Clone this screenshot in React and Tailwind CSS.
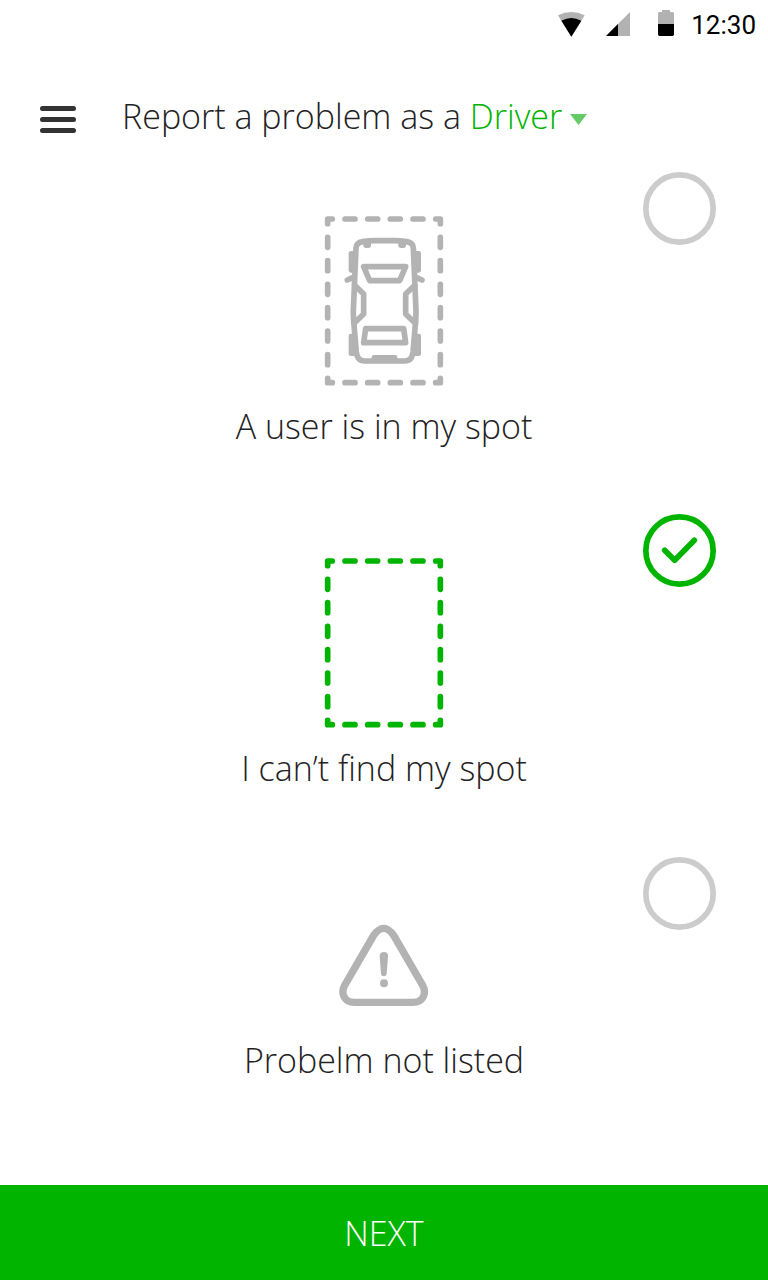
import { useState } from "react";

function StatusBar() {
  return (
    <div className="flex h-[50px] items-center justify-end pr-3">
      <svg className="mr-[21px] mb-[2px] h-[25px] w-[27px]" viewBox="54 36 81 75" aria-hidden="true">
        <path d="M54 46Q94 26 134 46L94 110Z" fill="#b2b2b2" />
        <path d="M64 62Q94 46 124 62L94 110Z" fill="#000" />
      </svg>
      <svg className="mr-7 mb-[2px] size-6" viewBox="0 0 72 72" aria-hidden="true">
        <path d="M0 72L72 0V72Z" fill="#b2b2b2" />
        <path d="M0 72L36 36V72Z" fill="#000" />
      </svg>
      <svg className="mr-[17px] mb-1 h-[26px] w-4" viewBox="0 0 48 78" aria-hidden="true">
        <path d="M12 0H36V6H44Q48 6 48 11V42H0V11Q0 6 4 6H12Z" fill="#b2b2b2" />
        <path d="M0 42H48V73Q48 78 43 78H5Q0 78 0 73Z" fill="#000" />
      </svg>
      <span className="font-['Roboto',sans-serif] text-[26px] font-normal leading-8 text-black">12:30</span>
    </div>
  );
}

function SpotIcon({ car }) {
  const columns = [93, 161, 229, 297];
  const rows = [94, 164, 235, 305, 375, 446];
  return (
    <svg
      className="h-[170px] w-[120px]"
      viewBox="30 30 360 510"
      fill="none"
      stroke="currentColor"
      strokeWidth="17"
      strokeLinecap="round"
      strokeLinejoin="round"
      aria-hidden="true"
    >
      <path d="M41 53V39H55M365 39H379V53M379 517V530H365M55 530H41V517" />
      {columns.map((x) => (
        <path key={x} d={`M${x} 39h30M${x} 530h30`} />
      ))}
      {rows.map((y) => (
        <path key={y} d={`M41 ${y}v30M379 ${y}v30`} />
      ))}
      {car && (
        <g>
          <path d="M126 126Q127 110 146 107Q164 104 184 104H240Q260 104 278 107Q297 110 298 126L306 315Q306 330 305 345L297 438Q294 465 272 465H152Q130 465 127 438L119 345Q118 330 118 315Z" />
          <path d="M149 182H275L257 224H167ZM155 368H269L275 410H149Z" />
          <path d="M122 238L149 264V324L120 352M302 238L275 264V324L304 352" />
          <path d="M100 222L116 215M324 222L308 215" />
          <g fill="currentColor" stroke="none">
            <rect x="104" y="135" width="20" height="65" rx="7" />
            <rect x="300" y="135" width="21" height="65" rx="7" />
            <rect x="104" y="383" width="22" height="67" rx="7" />
            <rect x="298" y="383" width="23" height="67" rx="7" />
            <rect x="148" y="104" width="23" height="22" rx="8" />
            <rect x="253" y="104" width="23" height="22" rx="8" />
            <rect x="173" y="447" width="77" height="18" rx="7" />
          </g>
        </g>
      )}
    </svg>
  );
}

function WarningIcon() {
  return (
    <svg className="h-[82px] w-[91px]" viewBox="45 42 273 246" fill="none" aria-hidden="true">
      <path
        d="M152 76Q182 34 212 76L299 226C312 250 300 277 270 277H94C64 277 52 250 65 226Z"
        stroke="currentColor"
        strokeWidth="22"
      />
      <path d="M170 138Q170 126 183 126Q195 126 195 138L191 192Q190 199 183 199Q175 199 174 192Z" fill="currentColor" />
      <circle cx="183" cy="220" r="12" fill="currentColor" />
    </svg>
  );
}

function Option({ value, label, checked, onSelect, icon, className }) {
  return (
    <label className={`grid cursor-pointer grid-cols-[1fr_auto_1fr] px-[52px] ${className}`}>
      <span className="col-start-2 flex flex-col items-center">
        <span className={checked ? "text-[#00b400]" : "text-[#b3b3b3]"}>{icon}</span>
        <span className="text-[#222]">{label}</span>
      </span>
      <span className={`col-start-3 row-start-1 grid size-[73px] justify-self-end ${checked ? "text-[#00b400]" : "text-[#ccc]"}`}>
        <input
          type="radio"
          name="problem"
          value={value}
          checked={checked}
          onChange={() => onSelect(value)}
          className="col-start-1 row-start-1 size-full cursor-pointer appearance-none rounded-full"
        />
        <svg
          className="pointer-events-none col-start-1 row-start-1 size-full"
          viewBox="39 42 219 219"
          fill="none"
          stroke="currentColor"
          strokeWidth="17"
          strokeLinecap="round"
          strokeLinejoin="round"
          aria-hidden="true"
        >
          <circle cx="148.500" cy="151.500" r="101" />
          {checked && <path d="M104 151L134 181L193 121" />}
        </svg>
      </span>
    </label>
  );
}

export default function App() {
  const [problem, setProblem] = useState("missing");
  return (
    <div className="flex min-h-screen flex-col bg-white font-['Open_Sans','Noto_Sans',sans-serif] text-[34px] font-light leading-10 text-[#222]">
      <StatusBar />
      <header className="flex items-center px-10 pt-[46px]">
        <button type="button" aria-label="Menu" className="mt-[6px] mr-[46px] flex w-9 flex-col gap-[6px]">
          <span className="h-[5px] rounded-full bg-[#333]" />
          <span className="h-[5px] rounded-full bg-[#333]" />
          <span className="h-[5px] rounded-full bg-[#333]" />
        </button>
        <label htmlFor="role" className="whitespace-pre">Report a problem as a </label>
        <span className="flex items-center text-[#00b400]">
          <select id="role" className="field-sizing-content appearance-none bg-transparent">
            <option>Driver</option>
          </select>
          <svg className="mt-[6px] ml-2 h-[11px] w-[17px]" viewBox="0 0 17 11" aria-hidden="true">
            <path d="M0 0H17L8.500 11Z" fill="#66cb66" />
          </svg>
        </span>
      </header>
      <main className="flex flex-1 flex-col pt-9">
        <Option
          value="occupied"
          label="A user is in my spot"
          checked={problem === "occupied"}
          onSelect={setProblem}
          className="min-h-[342px]"
          icon={<span className="block pt-11 pb-5"><SpotIcon car /></span>}
        />
        <Option
          value="missing"
          label="I can’t find my spot"
          checked={problem === "missing"}
          onSelect={setProblem}
          className="min-h-[343px]"
          icon={<span className="block pt-11 pb-5"><SpotIcon /></span>}
        />
        <Option
          value="other"
          label="Probelm not listed"
          checked={problem === "other"}
          onSelect={setProblem}
          className=""
          icon={<span className="block pt-[67px] pb-[34px]"><WarningIcon /></span>}
        />
      </main>
      <button type="button" className="h-[95px] w-full bg-[#00b400] text-white">NEXT</button>
    </div>
  );
}
